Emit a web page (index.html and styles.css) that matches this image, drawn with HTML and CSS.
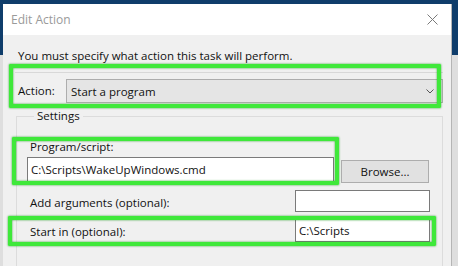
FILE: index.html
```html
<!DOCTYPE html>
<html lang="en">
<head>
  <meta charset="UTF-8">
  <title>Edit Action</title>
  <link rel="stylesheet" href="styles.css">
</head>
<body>

  <div class="dialog">
    <div class="titlebar">
      <span class="title">Edit Action</span>
      <svg class="close" width="11" height="11" viewBox="0 0 11 11">
        <path d="M0.5 0.5 L10.5 10.5 M10.5 0.5 L0.5 10.5" stroke="#7a7a7a" stroke-width="1" fill="none"/>
      </svg>
    </div>

    <div class="content">
      <p class="intro">You must specify what action this task will perform.</p>

      <div class="actionRow">
        <span class="label">Action:</span>
        <div class="select">
          <span>Start a program</span>
          <svg width="8" height="5" viewBox="0 0 8 5">
            <path d="M0.5 0.5 L4 4 L7.5 0.5" stroke="#555" stroke-width="1" fill="none"/>
          </svg>
        </div>
      </div>

      <fieldset class="settings">
        <legend>Settings</legend>

        <div class="label">Program/script:</div>
        <div class="programRow">
          <div class="input wide">C:\Scripts\WakeUpWindows.cmd</div>
          <div class="button">Browse...</div>
        </div>

        <div class="fieldRow">
          <span class="label">Add arguments (optional):</span>
          <div class="input short"></div>
        </div>

        <div class="fieldRow">
          <span class="label">Start in (optional):</span>
          <div class="input short tall">C:\Scripts</div>
        </div>
      </fieldset>
    </div>
  </div>

  <!-- highlight boxes drawn over the dialog -->
  <div class="mark markAction"></div>
  <div class="mark markProgram"></div>
  <div class="mark markStart"></div>

</body>
</html>
```

FILE: styles.css
```css
html, body {
  margin: 0;
  height: 100%;
  overflow: hidden;
}

body {
  position: relative;
  font-family: "Open Sans", "Noto Sans", sans-serif;
  font-size: 11.5px;
  color: #111;
  background: linear-gradient(to bottom, #0f3d6b 55px, #dedede 55px);
}

.dialog {
  margin: 4px 0 0 3px;
  width: 449px;
  height: 262px;
  background-color: #f0f0f0;
  border-right: 1px solid #b5b5b5;
  box-sizing: border-box;
}

.titlebar {
  height: 31px;
  background-color: #ffffff;
  display: flex;
  align-items: center;
  justify-content: space-between;
  padding: 0 13px 0 8px;
}

.title {
  color: #9a9a9a;
  font-size: 12px;
}

.content {
  padding: 0 0 0 15px;
}

.intro {
  margin: 13px 0 0;
  line-height: 16px;
}

.actionRow {
  margin: 8px 0 0 -3px;
  width: 425px;
  border-top: 1px solid #d8d8d8;
  padding: 6px 0 0 3px;
  display: flex;
  align-items: center;
}

.actionRow .label {
  width: 48px;
}

.select {
  flex: 1;
  height: 24px;
  box-sizing: border-box;
  background-color: #e5e5e5;
  border: 1px solid #adadad;
  display: flex;
  align-items: center;
  justify-content: space-between;
  padding: 0 8px 0 4px;
}

.settings {
  margin: 5px 0 0 -2px;
  width: 427px;
  height: 160px;
  box-sizing: border-box;
  border: 1px solid #dcdcdc;
  border-bottom: none;
  padding: 0 0 0 13px;
}

.settings legend {
  margin-left: 4px;
  padding: 0 3px;
  line-height: 16px;
}

.label {
  line-height: 16px;
}

.settings > .label {
  margin-top: 15px;
}

.programRow {
  margin-top: 2px;
  display: flex;
  align-items: flex-start;
  gap: 7px;
}

.input {
  background-color: #ffffff;
  border: 1px solid #7a7a7a;
  box-sizing: border-box;
  display: flex;
  align-items: center;
  padding: 0 3px;
}

.input.wide {
  width: 307px;
  height: 25px;
  margin-left: -3px;
}

.button {
  margin-top: 3px;
  width: 88px;
  height: 23px;
  box-sizing: border-box;
  background-color: #e1e1e1;
  border: 1px solid #adadad;
  display: flex;
  align-items: center;
  justify-content: center;
}

.fieldRow {
  margin-top: 7px;
  width: 400px;
  display: flex;
  align-items: center;
  justify-content: space-between;
}

.fieldRow .label {
  padding-top: 3px;
}

.input.short {
  width: 135px;
  height: 22px;
}

.input.tall {
  height: 23px;
}

.mark {
  position: absolute;
  border: 4px solid #3fe83a;
  box-shadow: 0 0 2px #1f9a1f, inset 0 0 2px #1f9a1f;
  box-sizing: border-box;
  border-radius: 1px;
}

.markAction {
  left: 9px;
  top: 64px;
  width: 432px;
  height: 44px;
}

.markProgram {
  left: 12px;
  top: 137px;
  width: 327px;
  height: 48px;
}

.markStart {
  left: 8px;
  top: 216px;
  width: 428px;
  height: 30px;
}
```
